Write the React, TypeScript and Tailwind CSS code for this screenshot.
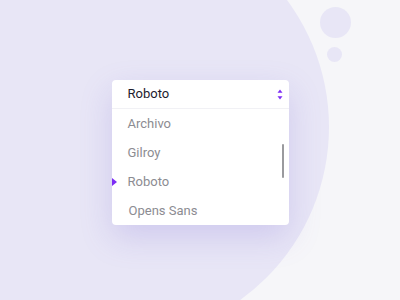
export default function App() {
  const fonts = ["Archivo", "Gilroy", "Roboto", "Opens Sans"];

  return (
    <div className="relative w-[400px] h-[300px] overflow-hidden bg-[#f6f6f9] font-['Roboto',sans-serif]">
      {/* Background circles */}
      <div className="absolute left-[-97px] top-[-86px] w-[426px] h-[426px] rounded-full bg-[#e8e6f6]"></div>
      <div className="absolute left-[320px] top-[7px] w-[31px] h-[31px] rounded-full bg-[#e8e6f6]"></div>
      <div className="absolute left-[327px] top-[47px] w-[15px] h-[15px] rounded-full bg-[#e8e6f6]"></div>

      {/* Dropdown */}
      <div className="relative flex justify-center pt-[80px]">
        <div className="relative w-[177px] rounded-[4px] bg-white shadow-[0_12px_32px_rgba(120,100,210,0.22)]">
          <div className="flex items-center justify-between h-[29px] pl-[16px] pr-[6px] border-b border-[#f1f1f5]">
            <span className="text-[13px] text-[#1c1b2e]">Roboto</span>
            <svg width="6" height="11" viewBox="0 0 6 11" className="text-[#7c2cf5]">
              <path d="M3 0.5 L5.5 3.8 L0.5 3.8 Z" fill="currentColor" />
              <path d="M3 10.5 L5.5 7.2 L0.5 7.2 Z" fill="currentColor" />
            </svg>
          </div>

          <div className="relative">
            {fonts.map((f, i) => (
              <div key={f} className="relative flex items-center h-[29px] pl-[16px]">
                {i === 2 && (
                  <svg
                    width="5"
                    height="8"
                    viewBox="0 0 5 8"
                    className="absolute left-0 top-[11px] text-[#7c2cf5]"
                  >
                    <path d="M0 0 L5 4 L0 8 Z" fill="currentColor" />
                  </svg>
                )}
                <span className={`text-[13px] text-[#8c8c92] ${i === 3 ? "pl-px" : ""}`}>{f}</span>
              </div>
            ))}
            {/* Scrollbar */}
            <div className="absolute right-[5px] top-[35px] w-[2px] h-[34px] rounded-full bg-[#9a9a9e]"></div>
          </div>
        </div>
      </div>
    </div>
  );
}
